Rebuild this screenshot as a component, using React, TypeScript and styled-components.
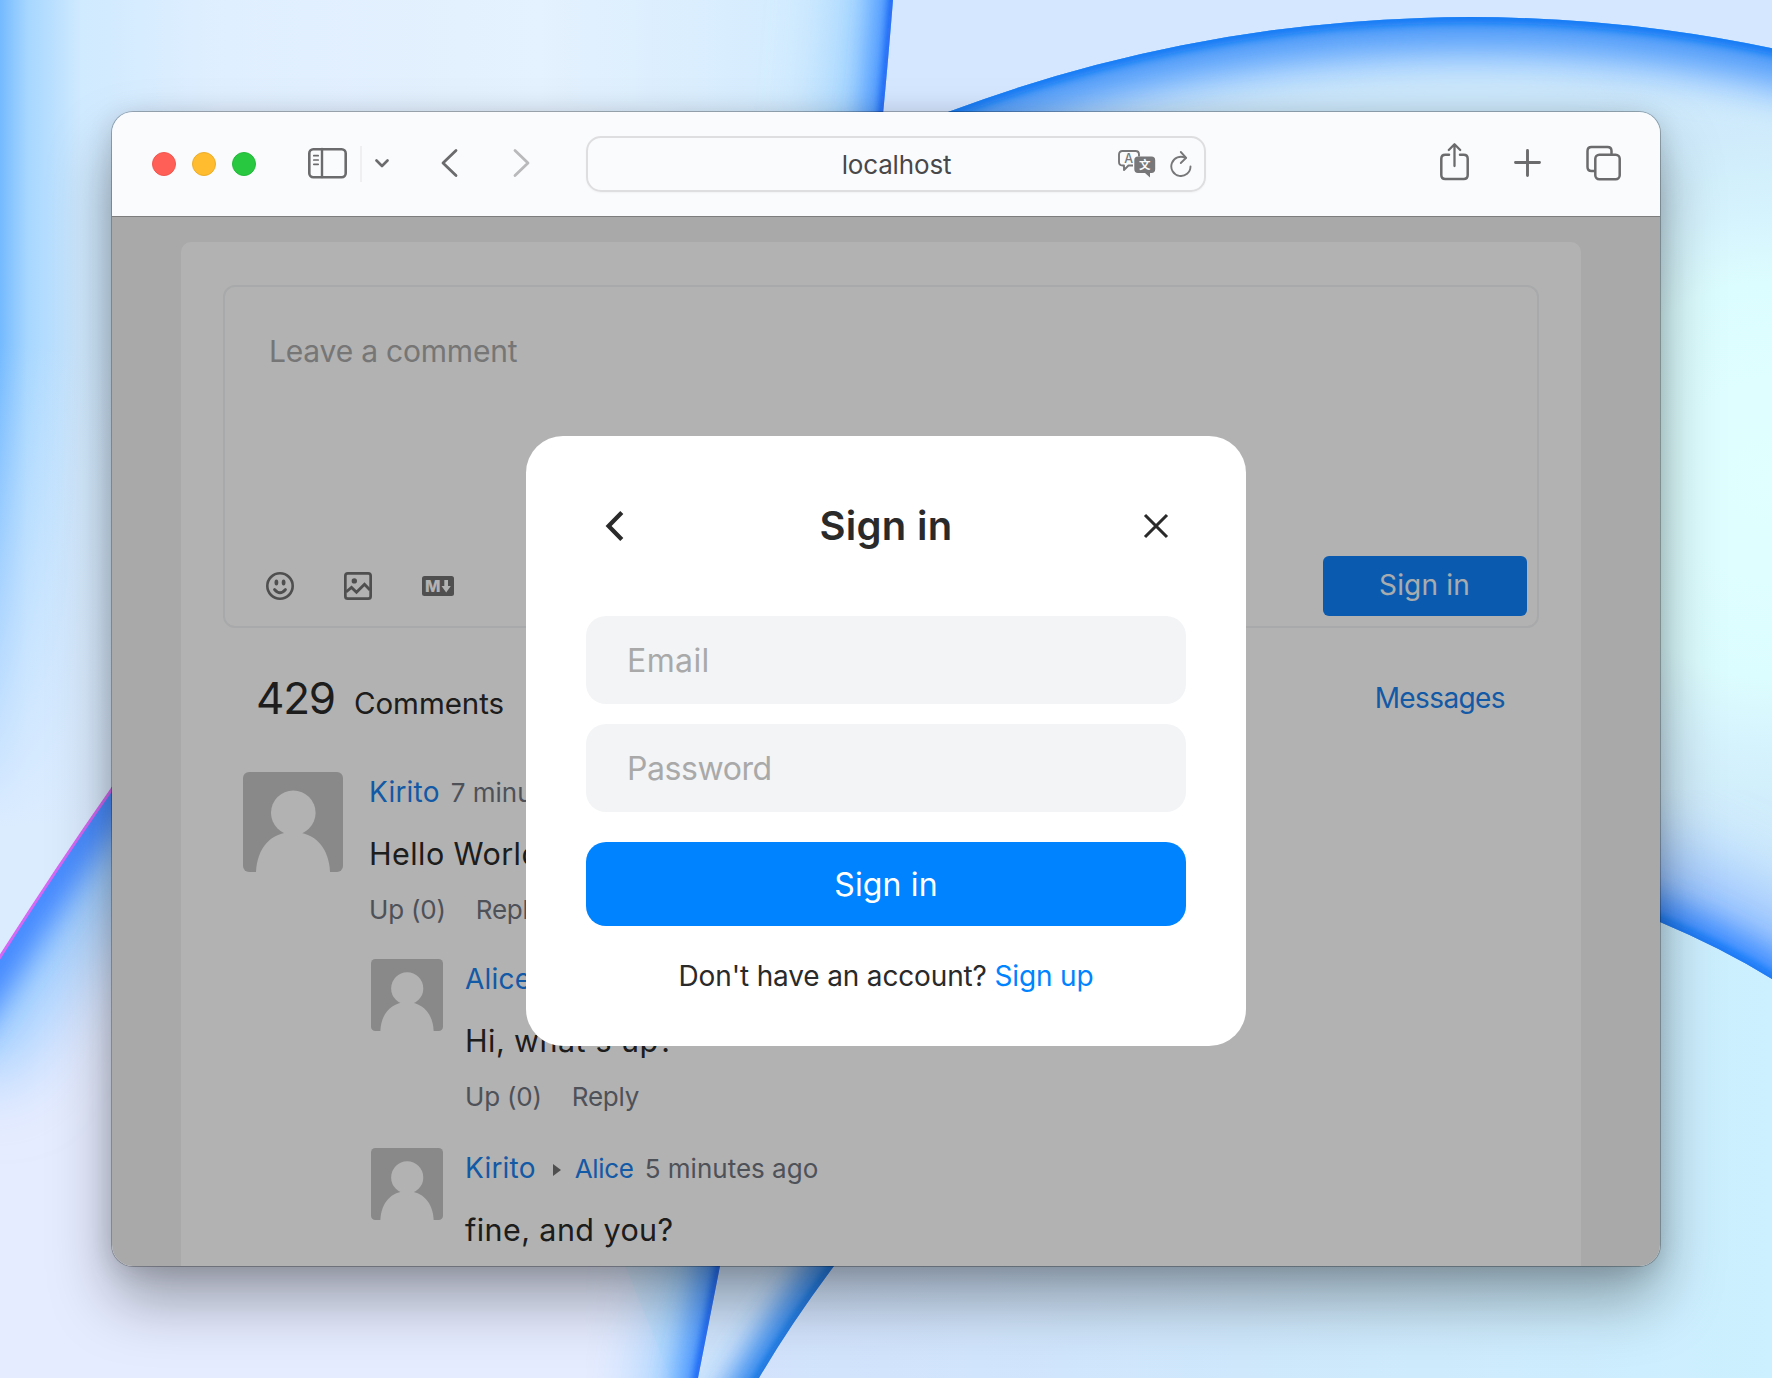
import React from "react";
import styled, { createGlobalStyle } from "styled-components";

const GlobalStyle = createGlobalStyle`
  * { box-sizing: border-box; }
  html, body { margin: 0; padding: 0; overflow: hidden; }
  body { font-family: Inter, "Noto Sans", "Noto Sans CJK SC", sans-serif; color: #2a2a2a; }
  button, input { font-family: inherit; }
  svg { display: block; flex: none; }
`;

/* ---------- desktop and window ---------- */

const Desktop = styled.div`
  position: relative;
  width: 1772px;
  height: 1378px;
  padding: 112px;
  overflow: hidden;
`;

const WallpaperSvg = styled.svg`
  position: absolute;
  inset: 0;
`;

const Window = styled.main`
  position: relative;
  display: flex;
  flex-direction: column;
  width: 1548px;
  height: 1154px;
  border-radius: 21px;
  overflow: hidden;
  box-shadow: 0 0 0 1px rgba(0, 0, 0, 0.26), 0 34px 62px rgba(0, 0, 0, 0.34), 0 4px 26px rgba(0, 0, 0, 0.14);
`;

const TitleBar = styled.header`
  display: flex;
  align-items: center;
  flex: none;
  height: 105px;
  padding: 0 39px 0 40px;
  background: #fafbfd;
  border-bottom: 1px solid #7d7d7d;
  color: #6b6b6d;
`;

const Lights = styled.div`
  display: flex;
  gap: 16px;
  margin-right: 52px;
`;

const Light = styled.span<{ $color: string; $ring: string }>`
  width: 24px;
  height: 24px;
  border-radius: 50%;
  background: ${(p) => p.$color};
  border: 1px solid ${(p) => p.$ring};
`;

const Divider = styled.span`
  width: 2px;
  height: 36px;
  margin: 0 13px 0 13px;
  background: #efeff1;
`;

const NavButtons = styled.div`
  display: flex;
  gap: 55px;
  margin: 0 56px 0 52px;
`;

const AddressBar = styled.div`
  display: grid;
  grid-template-columns: 1fr auto 1fr;
  align-items: center;
  width: 620px;
  height: 56px;
  padding: 0 12px;
  border: 2px solid #dedee0;
  border-radius: 15px;
  box-shadow: 0 1px 2px rgba(0, 0, 0, 0.04);
`;

const Address = styled.span`
  grid-column: 2;
  padding: 1px 0 0 1px;
  font-size: 26px;
  line-height: 50px;
  letter-spacing: -0.15px;
  color: #48484a;
`;

const AddressIcons = styled.div`
  display: flex;
  justify-content: flex-end;
  gap: 14px;
  color: #777779;
`;

const WindowActions = styled.div`
  display: flex;
  gap: 45px;
  margin-left: auto;
`;

const Viewport = styled.div`
  position: relative;
  flex: 1;
  min-height: 0;
  padding: 25px 79px 0 69px;
  overflow: hidden;
  background: #f2f2f2;
`;

/* ---------- comment page ---------- */

const Panel = styled.section`
  width: 1400px;
  height: 1100px;
  padding: 43px 42px 0;
  border-radius: 10px 10px 0 0;
  background: #fff;
`;

const Editor = styled.div`
  display: flex;
  flex-direction: column;
  justify-content: space-between;
  height: 343px;
  padding: 42px 10px 10px 41px;
  border: 2px solid #f1f2f4;
  border-radius: 12px;
`;

const EditorPlaceholder = styled.div`
  padding-left: 3px;
  font-size: 30px;
  line-height: 44px;
  letter-spacing: -0.2px;
  color: #a9a9a9;
`;

const EditorBar = styled.div`
  display: flex;
  align-items: center;
  justify-content: space-between;
`;

const EditorTools = styled.div`
  display: flex;
  align-items: center;
  gap: 50px;
  color: #727272;
`;

const SubmitButton = styled.button`
  width: 204px;
  height: 60px;
  padding: 0 1px 2px 0;
  border: 0;
  border-radius: 6px;
  background: #0f82fb;
  color: #f3f6fa;
  font-size: 28px;
  letter-spacing: 0.2px;
`;

const ListHeader = styled.div`
  display: flex;
  justify-content: space-between;
  margin: 40px 34px 43px 33px;
`;

const Total = styled.div`
  display: flex;
  align-items: baseline;
  gap: 19px;
`;

const TotalNumber = styled.span`
  font-size: 44px;
  line-height: 60px;
  letter-spacing: -1.2px;
`;

const TotalLabel = styled.span`
  font-size: 29.5px;
  letter-spacing: -0.05px;
`;

const Messages = styled.a`
  font-size: 28px;
  line-height: 61px;
  letter-spacing: -0.6px;
  color: #1a80ee;
`;

const Thread = styled.div`
  padding-left: 20px;
`;

const CommentRow = styled.article<{ $gap: number }>`
  display: flex;
  align-items: flex-start;
  gap: ${(p) => p.$gap}px;
`;

const Replies = styled.div`
  display: flex;
  flex-direction: column;
  gap: 33px;
  margin-top: 31px;
  padding-left: 2px;
`;

const CommentMeta = styled.div`
  display: flex;
  align-items: baseline;
  height: 40px;
  white-space: nowrap;
`;

const Author = styled.a`
  font-size: 28px;
  line-height: 40px;
  letter-spacing: 0.2px;
  color: #1a80ee;
`;

const ReplyArrow = styled.span`
  width: 0;
  height: 0;
  margin: 0 14px 0 17px;
  transform: translateY(-2px);
  border-left: 8px solid #727272;
  border-top: 6px solid transparent;
  border-bottom: 6px solid transparent;
`;

const ReplyTarget = styled.a`
  font-size: 26px;
  letter-spacing: -0.3px;
  color: #1a80ee;
`;

const Time = styled.span`
  margin-left: 11px;
  font-size: 26px;
  letter-spacing: 0;
  color: #70757f;
`;

const Body = styled.p`
  margin: 18px 0 14px;
  font-size: 30.5px;
  line-height: 48px;
  letter-spacing: 0.42px;
  white-space: nowrap;
`;

const Actions = styled.div`
  display: flex;
  gap: 30px;
  font-size: 26px;
  line-height: 36px;
  letter-spacing: -0.2px;
  color: #70757f;
`;

/* ---------- dialog ---------- */

const Overlay = styled.div`
  position: absolute;
  inset: 0;
  display: flex;
  align-items: center;
  justify-content: center;
  padding-bottom: 2px;
  background: rgba(0, 0, 0, 0.3);
`;

const Dialog = styled.form`
  display: flex;
  flex-direction: column;
  width: 720px;
  height: 610px;
  padding: 60px 60px 50px;
  border-radius: 37px;
  background: #fff;
`;

const DialogHeader = styled.div`
  display: grid;
  grid-template-columns: 60px 1fr 60px;
  align-items: center;
  margin-bottom: 60px;
`;

const DialogTitle = styled.h1`
  margin: 0;
  font-size: 40px;
  line-height: 60px;
  font-weight: 560;
  letter-spacing: 0.3px;
  text-align: center;
`;

const IconButton = styled.span<{ $side: "left" | "right" }>`
  display: flex;
  justify-content: ${(p) => (p.$side === "left" ? "flex-start" : "flex-end")};
  padding: ${(p) => (p.$side === "left" ? "0 0 0 19px" : "0 17px 0 0")};
`;

const Field = styled.input<{ $spacing: number }>`
  height: 88px;
  margin: 0 0 20px;
  padding: 2px 40px 0 41px;
  border: 0;
  border-radius: 20px;
  background: #f3f4f6;
  font-size: 32px;
  letter-spacing: ${(p) => p.$spacing}px;
  &::placeholder { color: #a9a9a9; opacity: 1; }
`;

const PrimaryButton = styled.button`
  height: 84px;
  margin: 10px 0 30px;
  padding: 2px 0 0;
  border: 0;
  border-radius: 20px;
  background: #0083ff;
  color: #fff;
  font-size: 32px;
  letter-spacing: 0.14px;
`;

const DialogFooter = styled.p`
  margin: 0;
  font-size: 28px;
  line-height: 40px;
  letter-spacing: -0.15px;
  text-align: center;
`;

const FooterLink = styled.a`
  color: #0083ff;
`;

/* ---------- drawings ---------- */

const A_PATH = "M-80 -80 H897 L893 0 Q880 165 852 400 Q800 850 720 1266 L698 1378 L690 1450 H-80 Z";
const A_EDGE = "M897 -80 L893 0 Q880 165 852 400 Q800 850 720 1266 L698 1378 L690 1450";
const B_EDGE = "M-60 1050 Q-25 994 0 957 Q58 866 112 789 Q200 672 330 540";
const C_EDGE = "M300 480 Q600 220 948 112 A1481 1481 0 0 1 1900 81";
const E_EDGE = "M900 1150 L834 1266 Q790 1325 759 1378 L722 1440";
const F_EDGE = "M1500 870 Q1590 890 1660 922 Q1722 948 1772 979 L1850 1030";

const Wallpaper = () => (
  <WallpaperSvg width="1772" height="1378" viewBox="0 0 1772 1378">
    <defs>
      <linearGradient id="left" x1="0" x2="1">
        <stop offset="0" stopColor="#74baff" />
        <stop offset="0.03" stopColor="#a6d6ff" />
        <stop offset="0.09" stopColor="#d0eaff" />
        <stop offset="0.25" stopColor="#e0efff" />
        <stop offset="0.6" stopColor="#e4f1fe" />
        <stop offset="1" stopColor="#cdeaff" />
      </linearGradient>
      <linearGradient id="leftFade" x1="0" y1="0" x2="0" y2="1">
        <stop offset="0.25" stopColor="#dfeeff" stopOpacity="0" />
        <stop offset="0.6" stopColor="#dcecff" stopOpacity="1" />
      </linearGradient>
      <radialGradient id="cyan" gradientUnits="userSpaceOnUse" cx="0" cy="0" r="1" gradientTransform="translate(1772 480) scale(420 440)">
        <stop offset="0" stopColor="#e0ffff" />
        <stop offset="0.45" stopColor="#dcfdff" />
        <stop offset="1" stopColor="#cfeafb" stopOpacity="0" />
      </radialGradient>
      <linearGradient id="floor" x1="0" x2="1">
        <stop offset="0.4" stopColor="#d3e2fc" />
        <stop offset="0.7" stopColor="#cfe8fc" />
        <stop offset="1" stopColor="#ccf0ff" />
      </linearGradient>
      <clipPath id="clipA"><path d={A_PATH} /></clipPath>
      <clipPath id="clipB"><path d={`${B_EDGE} L700 1450 H-80 Z`} /></clipPath>
      <clipPath id="clipC"><path d={`${C_EDGE} V1030 L1772 979 Q1722 948 1660 922 Q1590 890 1500 870 L300 900 Z`} /></clipPath>
      <clipPath id="clipE"><path d={`${E_EDGE} L600 1440 V1150 Z`} /></clipPath>
      <filter id="b40" x="-50%" y="-50%" width="200%" height="200%"><feGaussianBlur stdDeviation="36" /></filter>
      <filter id="b18" x="-50%" y="-50%" width="200%" height="200%"><feGaussianBlur stdDeviation="15" /></filter>
      <filter id="b4" x="-50%" y="-50%" width="200%" height="200%"><feGaussianBlur stdDeviation="4" /></filter>
    </defs>
    <rect width="1772" height="1378" fill="#d5e6ff" />
    <rect y="850" width="1772" height="528" fill="url(#floor)" />
    <g clipPath="url(#clipC)" fill="none">
      <rect x="300" width="1472" height="1100" fill="#cde8fb" />
      <rect x="1300" width="472" height="1100" fill="url(#cyan)" />
      <path d={C_EDGE} stroke="#9ccaff" strokeWidth="100" filter="url(#b18)" />
      <path d={C_EDGE} stroke="#4a97f8" strokeWidth="52" filter="url(#b18)" />
      <path d={C_EDGE} stroke="#0a78f5" strokeWidth="12" filter="url(#b4)" />
      <path d={F_EDGE} stroke="#8fbcff" strokeWidth="130" filter="url(#b40)" />
      <path d={F_EDGE} stroke="#3688ff" strokeWidth="44" filter="url(#b18)" />
      <path d={F_EDGE} stroke="#0a74f2" strokeWidth="9" filter="url(#b4)" />
    </g>
    <g clipPath="url(#clipE)" fill="none">
      <rect x="600" y="1150" width="300" height="228" fill="#cfe4fc" />
      <path d={E_EDGE} stroke="#2d86ee" strokeWidth="46" filter="url(#b18)" />
      <path d={E_EDGE} stroke="#0a6cd8" strokeWidth="7" filter="url(#b4)" />
    </g>
    <g clipPath="url(#clipA)" fill="none">
      <rect width="900" height="1378" fill="url(#left)" />
      <rect width="900" height="1378" fill="url(#leftFade)" />
      <g clipPath="url(#clipB)">
        <rect y="560" width="760" height="818" fill="#e6ecff" />
        <path d={B_EDGE} stroke="#9accff" strokeWidth="150" filter="url(#b40)" />
        <path d={B_EDGE} stroke="#4287ff" strokeWidth="50" filter="url(#b18)" />
      </g>
      <path d={B_EDGE} stroke="#d568f5" strokeWidth="3" />
      <path d={A_EDGE} stroke="#8ac8ff" strokeWidth="84" filter="url(#b40)" />
      <path d={A_EDGE} stroke="#3a8cff" strokeWidth="34" filter="url(#b18)" />
      <path d={A_EDGE} stroke="#0a50f0" strokeWidth="7" filter="url(#b4)" />
    </g>
  </WallpaperSvg>
);

const stroke = { fill: "none", stroke: "currentColor", strokeLinecap: "round", strokeLinejoin: "round" } as const;

const SidebarIcon = () => (
  <svg width="39" height="60" viewBox="0 0 39 60" {...stroke}>
    <rect x="1.3" y="15.3" width="36.4" height="28" rx="4" strokeWidth="2.6" />
    <path d="M14 15V43" strokeWidth="2.4" />
    <path d="M5.8 21.7H10.2M5.8 26H10.2M5.8 30.3H10.2" strokeWidth="1.7" />
  </svg>
);

const ChevronDownIcon = () => (
  <svg width="14" height="60" viewBox="0 0 14 60" {...stroke} strokeWidth="2.6">
    <path d="M1.5 26.5L7 32L12.5 26.5" />
  </svg>
);

const BackIcon = () => (
  <svg width="17" height="60" viewBox="0 0 17 60" {...stroke} strokeWidth="2.8">
    <path d="M15 16.5L2 29L15 41.5" />
  </svg>
);

const ForwardIcon = () => (
  <svg width="17" height="60" viewBox="0 0 17 60" {...stroke} stroke="#b9b9bb" strokeWidth="2.8">
    <path d="M2 16.5L15 29L2 41.5" />
  </svg>
);

const TranslateIcon = () => (
  <svg width="38" height="28" viewBox="0 0 38 28">
    <path d="M15 15.5L10.5 15.5L6 20V15.5H4.5Q1 15.5 1 12V4.5Q1 1 4.5 1H17.5Q21 1 21 4.5V6.5" fill="none" stroke="currentColor" strokeWidth="1.9" strokeLinejoin="round" />
    <text x="10.8" y="13.2" fontSize="12.5" fontWeight="500" textAnchor="middle" fill="currentColor">A</text>
    <path d="M20 6.5H33.5Q37.2 6.5 37.2 10.2V19.3Q37.2 23 33.5 23H32V27.5L27 23H20Q16.3 23 16.3 19.3V10.2Q16.3 6.5 20 6.5Z" fill="currentColor" />
    <text x="26.8" y="18.9" fontSize="11.5" fontWeight="700" fontFamily="Noto Sans CJK SC" textAnchor="middle" fill="#fafbfd">文</text>
  </svg>
);

const ReloadIcon = () => (
  <svg width="22" height="28" viewBox="0 0 22 28" {...stroke} strokeWidth="1.9">
    <path d="M20.5 16.5A9.6 9.6 0 1 1 15.5 8" />
    <path d="M10.8 2L16.2 7.8L10.8 13" />
  </svg>
);

const ShareIcon = () => (
  <svg width="29" height="60" viewBox="0 0 29 60" {...stroke} strokeWidth="2.5">
    <path d="M9 20.8H5.3Q1.3 20.8 1.3 24.8V41Q1.3 45 5.3 45H23.7Q27.7 45 27.7 41V24.8Q27.7 20.8 23.7 20.8H20" />
    <path d="M14.5 32V10.5M8.8 16L14.5 10.3L20.2 16" strokeWidth="2.3" />
  </svg>
);

const PlusIcon = () => (
  <svg width="27" height="60" viewBox="0 0 27 60" {...stroke} strokeWidth="2.9">
    <path d="M13.5 16.5V41.5M1.5 28.5H25.5" />
  </svg>
);

const TabsIcon = () => (
  <svg width="35" height="60" viewBox="0 0 35 60" {...stroke} strokeWidth="2.5">
    <path d="M8 37H5.5Q1.5 37 1.5 33V17Q1.5 13 5.5 13H21.5Q25.5 13 25.5 17V19.5" />
    <rect x="9.3" y="20.8" width="24.4" height="24.4" rx="4" />
  </svg>
);

const EmojiIcon = () => (
  <svg width="28" height="28" viewBox="0 0 28 28">
    <circle cx="14" cy="14" r="12.7" fill="none" stroke="currentColor" strokeWidth="2.6" />
    <ellipse cx="10.4" cy="10.4" rx="1.9" ry="3" fill="currentColor" />
    <ellipse cx="17.6" cy="10.4" rx="1.9" ry="3" fill="currentColor" />
    <path d="M8.5 17.5Q14 24 19.5 17.5" fill="none" stroke="currentColor" strokeWidth="2.8" strokeLinecap="round" />
  </svg>
);

const ImageIcon = () => (
  <svg width="28" height="28" viewBox="0 0 28 28">
    <rect x="1.35" y="1.35" width="25.3" height="25.3" rx="2.5" fill="none" stroke="currentColor" strokeWidth="2.7" />
    <circle cx="10.3" cy="8.9" r="2.7" fill="currentColor" />
    <path d="M2 20L7.5 15.5L12.5 20.3L20.5 12.3L26 18" fill="none" stroke="currentColor" strokeWidth="2.9" />
  </svg>
);

/* Bold "M" and down arrow on a filled plate. */
const MarkdownIcon = () => (
  <svg width="32" height="20" viewBox="0 0 32 20">
    <rect width="32" height="20" rx="2.5" fill="currentColor" />
    <text x="3" y="16" fontSize="16.5" fontWeight="800" textLength="15.5" lengthAdjust="spacingAndGlyphs" fill="#fff">M</text>
    <path d="M22.3 4H26V10H28.8L24.2 16.5L19.5 10H22.3Z" fill="#fff" />
  </svg>
);

const Avatar = ({ size }: { size: number }) => (
  <svg width={size} height={size} viewBox="0 0 100 100">
    <rect width="100" height="100" rx="6" fill="#c5c5c5" />
    <circle cx="50.3" cy="40.8" r="22.3" fill="#fff" />
    <path d="M13 100C14 76 28 60 50 60S86 76 87 100Z" fill="#fff" />
  </svg>
);

const DialogBackIcon = () => (
  <svg width="19" height="32" viewBox="0 0 19 32" fill="none" stroke="#2a2a2a" strokeWidth="4.3">
    <path d="M16.8 2.5L3.6 16L16.8 29.5" />
  </svg>
);

const DialogCloseIcon = () => (
  <svg width="26" height="26" viewBox="0 0 26 26" fill="none" stroke="#2a2a2a" strokeWidth="3.1">
    <path d="M2 2L24 24M24 2L2 24" />
  </svg>
);

/* ---------- composition ---------- */

type CommentProps = {
  author: string;
  replyTo?: string;
  time: string;
  text: string;
  nested?: boolean;
  children?: React.ReactNode;
};

const Comment = ({ author, replyTo, time, text, nested, children }: CommentProps) => (
  <CommentRow $gap={nested ? 22 : 26}>
    <Avatar size={nested ? 72 : 100} />
    <div>
      <CommentMeta>
        <Author>{author}</Author>
        {replyTo && <ReplyArrow />}
        {replyTo && <ReplyTarget>{replyTo}</ReplyTarget>}
        <Time>{time}</Time>
      </CommentMeta>
      <Body>{text}</Body>
      <Actions>
        <span>Up (0)</span>
        <span>Reply</span>
      </Actions>
      {children}
    </div>
  </CommentRow>
);

export default function App() {
  return (
    <Desktop>
      <GlobalStyle />
      <Wallpaper />
      <Window>
        <TitleBar>
          <Lights>
            <Light $color="#ff5f57" $ring="#f0574f" />
            <Light $color="#febc2e" $ring="#ecad2b" />
            <Light $color="#28c840" $ring="#24b93b" />
          </Lights>
          <SidebarIcon />
          <Divider />
          <ChevronDownIcon />
          <NavButtons>
            <BackIcon />
            <ForwardIcon />
          </NavButtons>
          <AddressBar>
            <Address>localhost</Address>
            <AddressIcons>
              <TranslateIcon />
              <ReloadIcon />
            </AddressIcons>
          </AddressBar>
          <WindowActions>
            <ShareIcon />
            <PlusIcon />
            <TabsIcon />
          </WindowActions>
        </TitleBar>
        <Viewport>
          <Panel>
            <Editor>
              <EditorPlaceholder>Leave a comment</EditorPlaceholder>
              <EditorBar>
                <EditorTools>
                  <EmojiIcon />
                  <ImageIcon />
                  <MarkdownIcon />
                </EditorTools>
                <SubmitButton>Sign in</SubmitButton>
              </EditorBar>
            </Editor>
            <ListHeader>
              <Total>
                <TotalNumber>429</TotalNumber>
                <TotalLabel>Comments</TotalLabel>
              </Total>
              <Messages>Messages</Messages>
            </ListHeader>
            <Thread>
              <Comment author="Kirito" time="7 minutes ago" text="Hello World!">
                <Replies>
                  <Comment nested author="Alice" time="6 minutes ago" text="Hi, what's up?" />
                  <Comment nested author="Kirito" replyTo="Alice" time="5 minutes ago" text="fine, and you?" />
                </Replies>
              </Comment>
            </Thread>
          </Panel>
          <Overlay>
            <Dialog>
              <DialogHeader>
                <IconButton $side="left"><DialogBackIcon /></IconButton>
                <DialogTitle>Sign in</DialogTitle>
                <IconButton $side="right"><DialogCloseIcon /></IconButton>
              </DialogHeader>
              <Field $spacing={0.4} placeholder="Email" />
              <Field $spacing={-0.42} placeholder="Password" />
              <PrimaryButton type="button">Sign in</PrimaryButton>
              <DialogFooter>
                Don't have an account? <FooterLink>Sign up</FooterLink>
              </DialogFooter>
            </Dialog>
          </Overlay>
        </Viewport>
      </Window>
    </Desktop>
  );
}
